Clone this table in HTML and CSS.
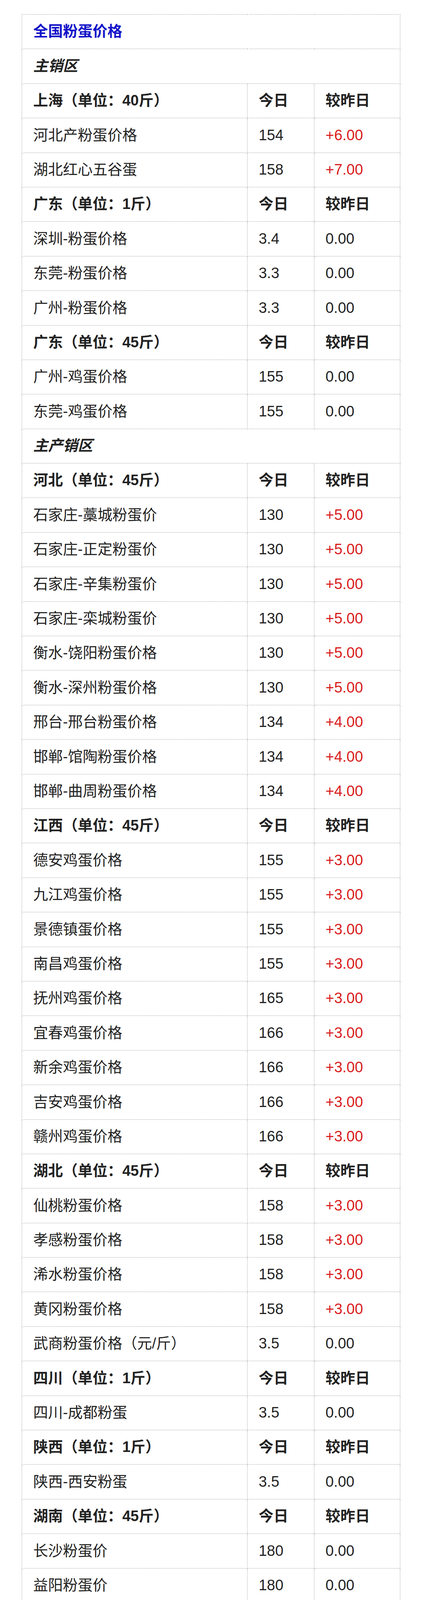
FILE: index.html
```html
<!DOCTYPE html>
<html lang="zh-CN">
<head>
<meta charset="utf-8">
<title>全国粉蛋价格</title>
<link rel="stylesheet" href="styles.css">
</head>
<body>
<table class="price-table">
  <colgroup>
    <col class="c-name">
    <col class="c-today">
    <col class="c-diff">
  </colgroup>
  <tbody>
    <tr class="title"><td colspan="3">全国粉蛋价格</td></tr>
    <tr class="section"><td colspan="3">主销区</td></tr>
    <tr class="head"><td>上海（单位：40斤）</td><td>今日</td><td>较昨日</td></tr>
    <tr><td>河北产粉蛋价格</td><td>154</td><td class="up">+6.00</td></tr>
    <tr><td>湖北红心五谷蛋</td><td>158</td><td class="up">+7.00</td></tr>
    <tr class="head"><td>广东（单位：1斤）</td><td>今日</td><td>较昨日</td></tr>
    <tr><td>深圳-粉蛋价格</td><td>3.4</td><td>0.00</td></tr>
    <tr><td>东莞-粉蛋价格</td><td>3.3</td><td>0.00</td></tr>
    <tr><td>广州-粉蛋价格</td><td>3.3</td><td>0.00</td></tr>
    <tr class="head"><td>广东（单位：45斤）</td><td>今日</td><td>较昨日</td></tr>
    <tr><td>广州-鸡蛋价格</td><td>155</td><td>0.00</td></tr>
    <tr><td>东莞-鸡蛋价格</td><td>155</td><td>0.00</td></tr>
    <tr class="section"><td colspan="3">主产销区</td></tr>
    <tr class="head"><td>河北（单位：45斤）</td><td>今日</td><td>较昨日</td></tr>
    <tr><td>石家庄-藁城粉蛋价</td><td>130</td><td class="up">+5.00</td></tr>
    <tr><td>石家庄-正定粉蛋价</td><td>130</td><td class="up">+5.00</td></tr>
    <tr><td>石家庄-辛集粉蛋价</td><td>130</td><td class="up">+5.00</td></tr>
    <tr><td>石家庄-栾城粉蛋价</td><td>130</td><td class="up">+5.00</td></tr>
    <tr><td>衡水-饶阳粉蛋价格</td><td>130</td><td class="up">+5.00</td></tr>
    <tr><td>衡水-深州粉蛋价格</td><td>130</td><td class="up">+5.00</td></tr>
    <tr><td>邢台-邢台粉蛋价格</td><td>134</td><td class="up">+4.00</td></tr>
    <tr><td>邯郸-馆陶粉蛋价格</td><td>134</td><td class="up">+4.00</td></tr>
    <tr><td>邯郸-曲周粉蛋价格</td><td>134</td><td class="up">+4.00</td></tr>
    <tr class="head"><td>江西（单位：45斤）</td><td>今日</td><td>较昨日</td></tr>
    <tr><td>德安鸡蛋价格</td><td>155</td><td class="up">+3.00</td></tr>
    <tr><td>九江鸡蛋价格</td><td>155</td><td class="up">+3.00</td></tr>
    <tr><td>景德镇蛋价格</td><td>155</td><td class="up">+3.00</td></tr>
    <tr><td>南昌鸡蛋价格</td><td>155</td><td class="up">+3.00</td></tr>
    <tr><td>抚州鸡蛋价格</td><td>165</td><td class="up">+3.00</td></tr>
    <tr><td>宜春鸡蛋价格</td><td>166</td><td class="up">+3.00</td></tr>
    <tr><td>新余鸡蛋价格</td><td>166</td><td class="up">+3.00</td></tr>
    <tr><td>吉安鸡蛋价格</td><td>166</td><td class="up">+3.00</td></tr>
    <tr><td>赣州鸡蛋价格</td><td>166</td><td class="up">+3.00</td></tr>
    <tr class="head"><td>湖北（单位：45斤）</td><td>今日</td><td>较昨日</td></tr>
    <tr><td>仙桃粉蛋价格</td><td>158</td><td class="up">+3.00</td></tr>
    <tr><td>孝感粉蛋价格</td><td>158</td><td class="up">+3.00</td></tr>
    <tr><td>浠水粉蛋价格</td><td>158</td><td class="up">+3.00</td></tr>
    <tr><td>黄冈粉蛋价格</td><td>158</td><td class="up">+3.00</td></tr>
    <tr><td>武商粉蛋价格（元/斤）</td><td>3.5</td><td>0.00</td></tr>
    <tr class="head"><td>四川（单位：1斤）</td><td>今日</td><td>较昨日</td></tr>
    <tr><td>四川-成都粉蛋</td><td>3.5</td><td>0.00</td></tr>
    <tr class="head"><td>陕西（单位：1斤）</td><td>今日</td><td>较昨日</td></tr>
    <tr><td>陕西-西安粉蛋</td><td>3.5</td><td>0.00</td></tr>
    <tr class="head"><td>湖南（单位：45斤）</td><td>今日</td><td>较昨日</td></tr>
    <tr><td>长沙粉蛋价</td><td>180</td><td>0.00</td></tr>
    <tr><td>益阳粉蛋价</td><td>180</td><td>0.00</td></tr>
    <tr><td>常德粉蛋价</td><td>180</td><td>0.00</td></tr>
    <tr><td>永州粉蛋价</td><td>180</td><td>0.00</td></tr>
    <tr><td>衡阳粉蛋价</td><td>180</td><td>0.00</td></tr>
    <tr><td>怀化粉蛋价</td><td>180</td><td>0.00</td></tr>
    <tr><td>邵阳粉蛋价</td><td>180</td><td>0.00</td></tr>
    <tr><td>株洲粉蛋价</td><td>180</td><td>0.00</td></tr>
    <tr><td>娄底粉蛋价</td><td>180</td><td>0.00</td></tr>
    <tr><td>郴州粉蛋价</td><td>180</td><td>0.00</td></tr>
    <tr><td>岳阳粉蛋价</td><td>180</td><td>0.00</td></tr>
    <tr class="head"><td>云南（单位：45斤）</td><td>今日</td><td>较昨日</td></tr>
    <tr><td>云南-昆明粉蛋</td><td>159</td><td class="up">+5.00</td></tr>
    <tr class="head"><td>新疆（单位：45斤）</td><td>今日</td><td>较昨日</td></tr>
    <tr><td>新疆粉蛋</td><td>150</td><td>0.00</td></tr>
  </tbody>
</table>
</body>
</html>
```
FILE: styles.css
```css
html, body {
  margin: 0;
  padding: 0;
  background: #ffffff;
}

body {
  padding-top: 36px;
  font-family: "Liberation Sans", "Noto Sans CJK SC", sans-serif;
  color: #222222;
}

.price-table {
  width: 968px;
  margin: 0 auto;
  border-collapse: collapse;
  table-layout: fixed;
  font-size: 38px;
}

.c-name { width: 577px; }
.c-today { width: 171px; }
.c-diff { width: 220px; }

.price-table tr {
  height: 88.4px;
}

.price-table td {
  border: 2px dotted #c4c4c4;
  padding: 0 0 0 28px;
  line-height: 1.2;
  vertical-align: middle;
  white-space: nowrap;
  overflow: hidden;
}

.title td {
  color: #1414c8;
  font-weight: bold;
}

.section td {
  font-weight: bold;
  font-style: italic;
}

.head td {
  font-weight: bold;
}

.price-table td.up {
  color: #d91c1c;
}
```
